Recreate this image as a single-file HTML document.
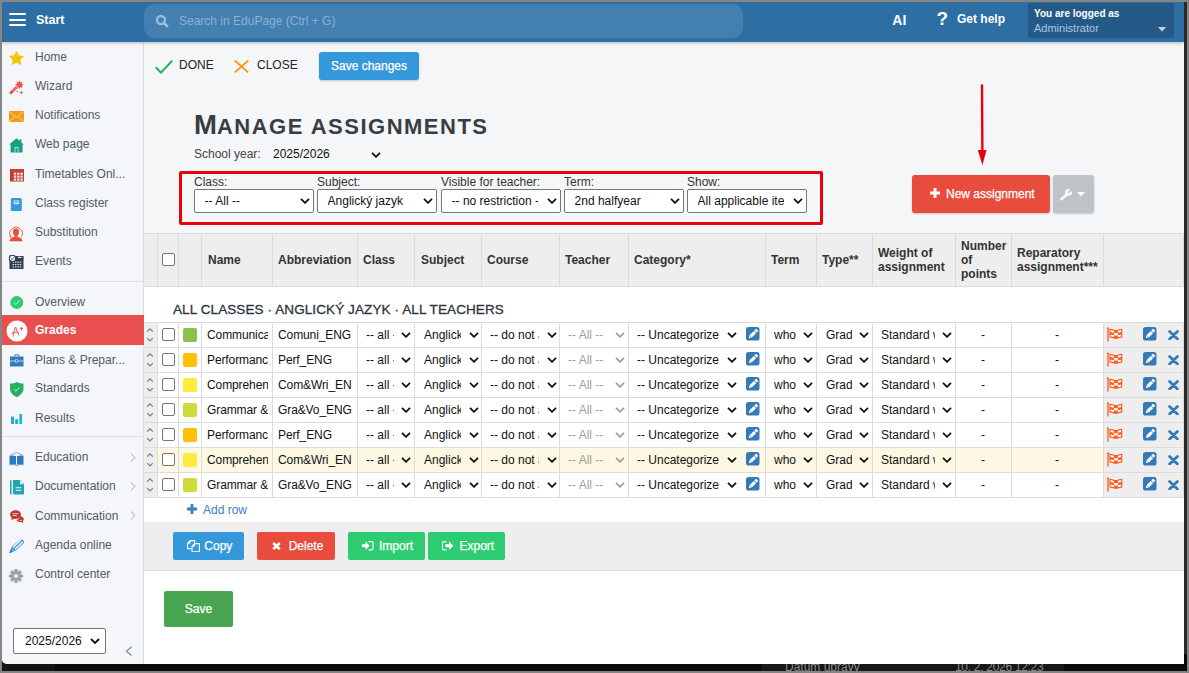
<!DOCTYPE html>
<html><head><meta charset="utf-8">
<style>
*{box-sizing:border-box;margin:0;padding:0}
html,body{width:1189px;height:673px;overflow:hidden;background:#858585;font-family:"Liberation Sans",sans-serif;font-size:12px;color:#222}
.abs{position:absolute}
#win{position:absolute;left:2px;top:2px;width:1182px;height:662px;overflow:hidden;background:#fff;border-bottom-left-radius:5px;z-index:2}
#rstrip{position:absolute;left:1184px;top:2px;width:3px;height:662px;background:#2a2a2a}
#bstrip{position:absolute;left:2px;top:654px;width:1185px;height:17px;background:#0a0a0a;overflow:hidden;z-index:1}
#hdr{position:absolute;left:0;top:0;width:1182px;height:40px;background:#2d6fa3;z-index:5;box-shadow:0 1px 3px rgba(0,0,0,.25)}
#side{position:absolute;left:0;top:0;width:142px;height:662px;background:#f4f6f9;border-right:1px solid #d9dde2}
#main{position:absolute;left:142px;top:40px;width:1040px;height:622px;background:#f5f6f8}
.hl{position:absolute;left:7px;width:17px;height:2px;background:#fff;border-radius:1px}
.nav{position:absolute;left:0;width:141px;height:29px;color:#4e5a6a;font-size:12px}
.nav .t{position:absolute;left:34px;top:8px;white-space:nowrap}
.nav .ic{position:absolute;left:7px;top:7px;width:16px;height:16px}
.nav .chev{position:absolute;left:126px;top:9px;width:6px;height:10px}
.nt{position:absolute;left:33px;color:#505b6b;font-size:12px;white-space:nowrap}
.hline{position:absolute;height:1px;background:#dcdcdc}
.vline{position:absolute;width:1px;background:#dcdcdc}
.cb{width:13px;height:13px;border:1px solid #767676;border-radius:2px;background:#fff}
.th{font-weight:bold;font-size:12px;color:#333;line-height:14px;white-space:nowrap}
.td{font-size:12px;color:#111;white-space:nowrap;overflow:hidden;letter-spacing:-0.1px}
.sel{border:1px solid #767676;border-radius:2px;background:#fff}
.sel .st{position:absolute;top:4px;font-size:12px;color:#111;white-space:nowrap;overflow:hidden;width:86.5px}
.sel .chev{position:absolute}
.btn{font-size:12px}
.sep{position:absolute;left:0;width:141px;height:1px;background:#dde1e6}
</style></head><body>
<div id="win">
  <div id="hdr">
    <div class="hl" style="top:11px"></div>
    <div class="hl" style="top:16.5px"></div>
    <div class="hl" style="top:22px"></div>
    <div class="abs" style="left:34px;top:11px;color:#fff;font-weight:bold;font-size:12.5px">Start</div>
    <div class="abs" style="left:142px;top:1.5px;width:599px;height:34px;border-radius:11px;background:#4280b1"></div>
    <svg class="abs" style="left:153px;top:12px" width="14" height="14" viewBox="0 0 14 14"><circle cx="6" cy="6" r="4" fill="none" stroke="#9cbcd8" stroke-width="2.3"/><path d="M9 9 L12.2 12.2" stroke="#9cbcd8" stroke-width="2.6" stroke-linecap="round"/></svg>
    <div class="abs" style="left:177px;top:12px;color:#8db2d3;font-size:12px">Search in EduPage (Ctrl + G)</div>
    <div class="abs" style="left:890.3px;top:10px;color:#fff;font-weight:bold;font-size:14px">AI</div>
    <div class="abs" style="left:934.5px;top:6.3px;color:#fff;font-weight:bold;font-size:19px">?</div>
    <div class="abs" style="left:955px;top:10px;color:#fff;font-weight:bold;font-size:12px">Get help</div>
    <div class="abs" style="left:1026px;top:1px;width:146px;height:35px;border-radius:3px;background:#255a88"></div>
    <div class="abs" style="left:1032px;top:6px;color:#fff;font-weight:bold;font-size:10px">You are logged as</div>
    <div class="abs" style="left:1032px;top:20px;color:#a8c6e6;font-size:11px">Administrator</div>
    <svg class="abs" style="left:1156px;top:25px" width="8" height="5"><path d="M0 0 L8 0 L4 4.5Z" fill="#c9d2da"/></svg>
  </div>
  <div id="side">
    <div class="sep" style="top:279px"></div>
    <div class="sep" style="top:434px"></div>
    <div class="abs" style="left:0;top:313px;width:142px;height:29.5px;background:#ea4f4f"></div>
    <div class="nt" style="top:47.75px">Home</div>
    <div class="nt" style="top:76.75px">Wizard</div>
    <div class="nt" style="top:105.75px">Notifications</div>
    <div class="nt" style="top:134.75px">Web page</div>
    <div class="nt" style="top:164.5px">Timetables Onl...</div>
    <div class="nt" style="top:193.6px">Class register</div>
    <div class="nt" style="top:222.6px">Substitution</div>
    <div class="nt" style="top:251.6px">Events</div>
    <div class="nt" style="top:292.5px">Overview</div>
    <div class="nt" style="top:321.3px;color:#fff;font-weight:bold">Grades</div>
    <div class="nt" style="top:350.5px">Plans &amp; Prepar...</div>
    <div class="nt" style="top:379.3px">Standards</div>
    <div class="nt" style="top:408.6px">Results</div>
    <div class="nt" style="top:448.3px">Education</div>
    <div class="nt" style="top:477.4px">Documentation</div>
    <div class="nt" style="top:506.6px">Communication</div>
    <div class="nt" style="top:535.8px">Agenda online</div>
    <div class="nt" style="top:565.1px">Control center</div>
    <svg class="abs" style="left:128px;top:451px" width="6" height="9"><path d="M1 0.5 L5 4.5 L1 8.5" fill="none" stroke="#c3c8ce" stroke-width="1.1"/></svg>
    <svg class="abs" style="left:128px;top:480px" width="6" height="9"><path d="M1 0.5 L5 4.5 L1 8.5" fill="none" stroke="#c3c8ce" stroke-width="1.1"/></svg>
    <svg class="abs" style="left:128px;top:509px" width="6" height="9"><path d="M1 0.5 L5 4.5 L1 8.5" fill="none" stroke="#c3c8ce" stroke-width="1.1"/></svg>
    <!-- icons -->
    <svg class="abs" style="left:7px;top:49px" width="15" height="14.5" viewBox="0 0 15 14.5"><path d="M7.50 0.10 L9.76 4.49 L14.63 5.28 L11.16 8.79 L11.91 13.67 L7.50 11.45 L3.09 13.67 L3.84 8.79 L0.37 5.28 L5.24 4.49Z" fill="#f1c40f" stroke="#f1c40f" stroke-width="0.4" stroke-linejoin="round"/></svg>
    <svg class="abs" style="left:7px;top:78px" width="16" height="16" viewBox="0 0 16 16"><path d="M10.40 0.20 L11.28 2.68 L13.65 1.55 L12.52 3.92 L15.00 4.80 L12.52 5.68 L13.65 8.05 L11.28 6.92 L10.40 9.40 L9.52 6.92 L7.15 8.05 L8.28 5.68 L5.80 4.80 L8.28 3.92 L7.15 1.55 L9.52 2.68Z" fill="#e74c3c"/><path d="M1.1 13.6 L8.4 6.3" stroke="#e74c3c" stroke-width="2.7"/><path d="M7.2 7.6 L9.4 5.4" stroke="#f4f6f9" stroke-width="0.7"/><path d="M2.50 9.90 L4.30 11.70" stroke="#f4f6f9" stroke-width="0.45"/><path d="M3.80 8.60 L5.60 10.40" stroke="#f4f6f9" stroke-width="0.45"/><path d="M5.10 7.30 L6.90 9.10" stroke="#f4f6f9" stroke-width="0.45"/><path d="M6.40 6.00 L8.20 7.80" stroke="#f4f6f9" stroke-width="0.45"/><path d="M12.30 10.10 L12.79 11.91 L14.60 12.40 L12.79 12.89 L12.30 14.70 L11.81 12.89 L10.00 12.40 L11.81 11.91Z" fill="#e74c3c"/><circle cx="8.3" cy="11.3" r="0.75" fill="#e74c3c"/></svg>
    <svg class="abs" style="left:7px;top:108.8px" width="15" height="11.5" viewBox="0 0 15 11.5"><rect x="0" y="0" width="15" height="11.5" fill="#f39c12"/><path d="M0.3 0.6 L7.5 6.3 L14.7 0.6 M0.3 11 L5.5 5.5 M14.7 11 L9.5 5.5" fill="none" stroke="#fbe6c4" stroke-width="0.8"/></svg>
    <svg class="abs" style="left:7px;top:136px" width="15" height="15" viewBox="0 0 15 15"><path d="M7.5 0.2 L10.5 2.8 L10.5 1.2 L12.3 1.2 L12.3 4.4 L14.8 6.6 L13.6 6.6 L13.6 14.4 L1.6 14.4 L1.6 6.6 L0.2 6.6Z" fill="#16a085"/><rect x="5.6" y="9" width="3.8" height="5.4" fill="#d5efe9"/><rect x="6.4" y="9.8" width="2.2" height="4.6" fill="#16a085"/></svg>
    <svg class="abs" style="left:7.8px;top:167px" width="14" height="12.5" viewBox="0 0 14 12.5"><rect x="0" y="0" width="14" height="12.5" fill="#c0392b"/><rect x="3.70" y="3.60" width="2.55" height="2.15" fill="#f7dcd8"/><rect x="7.05" y="3.60" width="2.55" height="2.15" fill="#f7dcd8"/><rect x="10.40" y="3.60" width="2.55" height="2.15" fill="#f7dcd8"/><rect x="3.70" y="6.55" width="2.55" height="2.15" fill="#f7dcd8"/><rect x="7.05" y="6.55" width="2.55" height="2.15" fill="#f7dcd8"/><rect x="10.40" y="6.55" width="2.55" height="2.15" fill="#f7dcd8"/><rect x="3.70" y="9.50" width="2.55" height="2.15" fill="#f7dcd8"/><rect x="7.05" y="9.50" width="2.55" height="2.15" fill="#f7dcd8"/><rect x="10.40" y="9.50" width="2.55" height="2.15" fill="#f7dcd8"/><g fill="#d9534f"><circle cx="1.9" cy="1.7" r="0.9"/><circle cx="4.9" cy="1.7" r="0.9"/><circle cx="8.2" cy="1.7" r="0.9"/><circle cx="11.6" cy="1.7" r="0.9"/></g></svg>
    <svg class="abs" style="left:7.7px;top:195.8px" width="12" height="13.2" viewBox="0 0 12 13.2"><rect x="0.8" y="0" width="11" height="13.2" rx="1.6" fill="#3498db"/><rect x="3.6" y="2.6" width="5.6" height="3.6" fill="#d6eaf8"/><rect x="4.2" y="3.6" width="4.4" height="1" fill="#3498db"/><g fill="#d6eaf8"><rect x="0" y="3" width="1.4" height="0.7"/><rect x="0" y="6" width="1.4" height="0.7"/><rect x="0" y="9" width="1.4" height="0.7"/></g></svg>
    <svg class="abs" style="left:7.4px;top:224px" width="14" height="15.5" viewBox="0 0 14 15.5"><path d="M7 2.5 C9 2.5 10 4 10 6 C10 7.8 9.2 9.2 8.4 9.9 L8.4 10.8 C10.8 11.5 13.3 12.4 13.5 15.3 L0.5 15.3 C0.7 12.4 3.2 11.5 5.6 10.8 L5.6 9.9 C4.8 9.2 4 7.8 4 6 C4 4 5 2.5 7 2.5Z" fill="#e74c3c"/><path d="M1.8 10.8 A6.2 6.2 0 1 1 12.4 10.8" fill="none" stroke="#e74c3c" stroke-width="0.9"/><path d="M0.3 10.3 L2.6 10.2 L1.9 12.3Z" fill="#e74c3c"/></svg>
    <svg class="abs" style="left:7.4px;top:253.2px" width="14.5" height="14.2" viewBox="0 0 14.5 14.2"><rect x="0.5" y="3" width="14" height="11.2" fill="#2c3e50"/><g fill="#e8ecef"><rect x="3.6" y="6.6" width="1.4" height="1.2"/><rect x="6" y="6.6" width="1.4" height="1.2"/><rect x="8.4" y="6.6" width="1.4" height="1.2"/><rect x="10.8" y="6.6" width="1.4" height="1.2"/><rect x="3.6" y="9" width="1.4" height="1.2"/><rect x="6" y="9" width="1.4" height="1.2"/><rect x="8.4" y="9" width="1.4" height="1.2"/><rect x="10.8" y="9" width="1.4" height="1.2"/><rect x="3.6" y="11.4" width="1.4" height="1.2"/><rect x="6" y="11.4" width="1.4" height="1.2"/><rect x="8.4" y="11.4" width="1.4" height="1.2"/><rect x="10.8" y="11.4" width="1.4" height="1.2"/></g><rect x="6.5" y="1" width="8" height="3.2" fill="#2c3e50"/><rect x="9" y="1.8" width="3.5" height="1.2" fill="#e8ecef"/><circle cx="3.4" cy="3.4" r="3.2" fill="#f4f6f9" stroke="#2c3e50" stroke-width="1.2"/><path d="M2 3.6 L3.2 4.6 L4.8 2.2" fill="none" stroke="#2c3e50" stroke-width="0.8"/></svg>
    <svg class="abs" style="left:7.8px;top:294px" width="13.5" height="13" viewBox="0 0 13.5 13"><circle cx="6.75" cy="6.5" r="6.5" fill="#2ecc71"/><path d="M3.8 6.8 L5.8 8.6 L9.8 4.4" fill="none" stroke="#d5f5e3" stroke-width="1"/></svg>
    <svg class="abs" style="left:3.7px;top:318px" width="22" height="22" viewBox="0 0 22 22"><circle cx="11" cy="11" r="10.5" fill="#fff"/><path d="M7 16.6 C7.5 13 8.4 9.5 9.6 7 C10.6 9.8 11.6 12.6 12.8 15.2 M5.4 13.4 C7.8 12.2 10.5 11.8 12.6 12.4 M13.8 8.6 L17.2 8.6 M15.5 6.9 L15.5 10.4" fill="none" stroke="#e85656" stroke-width="1"/></svg>
    <svg class="abs" style="left:8px;top:352px" width="13.5" height="12.5" viewBox="0 0 13.5 12.5"><path d="M4.8 2.5 L4.8 0.8 L8.7 0.8 L8.7 2.5" fill="none" stroke="#3a83c4" stroke-width="1"/><rect x="0" y="2.5" width="13.5" height="10" fill="#2e7bbf"/><rect x="0" y="6.6" width="13.5" height="0.8" fill="#dbe8f4"/><rect x="5.6" y="5.8" width="2.3" height="2.3" fill="#2e7bbf" stroke="#dbe8f4" stroke-width="0.6"/></svg>
    <svg class="abs" style="left:8px;top:380px" width="13.5" height="15.2" viewBox="0 0 13.5 15.2"><path d="M6.75 0 C8.8 1.2 11.3 1.6 13.5 1.6 L13.5 6.5 C13.5 10.5 10.5 13.6 6.75 15.2 C3 13.6 0 10.5 0 6.5 L0 1.6 C2.2 1.6 4.7 1.2 6.75 0Z" fill="#27ae60"/><path d="M4.2 7.4 L6 9.2 L9.4 5.6" fill="none" stroke="#d4efdf" stroke-width="1"/></svg>
    <svg class="abs" style="left:8.9px;top:411.7px" width="11.5" height="10.8" viewBox="0 0 11.5 10.8"><rect x="0" y="2.6" width="3" height="8.2" fill="#1ab3d1"/><rect x="4.2" y="5.2" width="3" height="5.6" fill="#1ab3d1"/><rect x="8.4" y="0" width="3" height="10.8" fill="#1ab3d1"/></svg>
    <svg class="abs" style="left:7px;top:449.8px" width="15" height="14" viewBox="0 0 15 14"><path d="M0.7 3.5 L7.5 0.5 L14.3 3.5" fill="none" stroke="#5b97cf" stroke-width="0.8"/><path d="M0.5 4 C2.5 3.3 5 3.3 7 4.3 L7 12.6 C5 11.8 2.5 11.8 0.5 12.4Z M8 4.3 C10 3.3 12.5 3.3 14.5 4 L14.5 12.4 C12.5 11.8 10 11.8 8 12.6Z" fill="#2b7bbf"/><path d="M0.5 12.9 C3 12.3 5.5 12.5 7.5 13.4 C9.5 12.5 12 12.3 14.5 12.9" fill="none" stroke="#2b7bbf" stroke-width="0.8"/></svg>
    <svg class="abs" style="left:7.6px;top:478px" width="14.5" height="14.5" viewBox="0 0 14.5 14.5"><rect x="0" y="0.3" width="1.6" height="14" fill="#22a6b3"/><path d="M3 0 L10 0 L14.3 4.3 L14.3 13.2 C14.3 13.9 13.9 14.4 13.2 14.4 L4.1 14.4 C3.4 14.4 3 13.9 3 13.2Z" fill="#22a6b3"/><path d="M10 0.4 L10 4.2 L14 4.2Z" fill="#e0f3f5"/><rect x="5.8" y="7.2" width="5.5" height="1" fill="#e0f3f5"/><rect x="5.8" y="9.8" width="5.5" height="1" fill="#e0f3f5"/></svg>
    <svg class="abs" style="left:7.6px;top:508px" width="14" height="13.2" viewBox="0 0 14 13.2"><path d="M5.6 0.2 C8.6 0.2 11 2 11 4.6 C11 7.2 8.6 9 5.6 9 C4.9 9 4.3 8.9 3.7 8.8 L1.2 10.4 L1.8 8 C0.7 7.2 0.2 6 0.2 4.6 C0.2 2 2.6 0.2 5.6 0.2Z" fill="#c0392b"/><path d="M10.8 6.2 C12.7 6.6 13.8 7.8 13.8 9.2 C13.8 10 13.4 10.7 12.8 11.2 L13.3 13 L11.3 12 C10.9 12.1 10.5 12.1 10.1 12.1 C8.6 12.1 7.3 11.5 6.6 10.6" fill="#c0392b"/><rect x="2.8" y="3.3" width="5.6" height="0.9" fill="#f2d7d5"/><rect x="2.8" y="5.2" width="4" height="0.9" fill="#f2d7d5"/><path d="M8.5 9.8 C9.5 10.6 11 10.8 12.2 10.3" fill="none" stroke="#f2d7d5" stroke-width="0.7"/></svg>
    <svg class="abs" style="left:6.8px;top:536.5px" width="15.5" height="14.5" viewBox="0 0 15.5 14.5"><path d="M11.2 0.6 C12.5 0 14.4 0.9 15 2.2 C15.3 3 15.1 3.8 14.5 4.4 L7 11.6 L0.3 14.2 L2.8 7.6Z" fill="#4ba3e3"/><path d="M4 8.2 L11.8 0.9 M6 10.2 L13.8 2.9" fill="none" stroke="#f0f6fc" stroke-width="1.4"/><path d="M0.3 14.2 L1.6 10.6 L3.9 12.9Z" fill="#2b86c9"/></svg>
    <svg class="abs" style="left:7.3px;top:566.5px" width="14" height="14" viewBox="0 0 14 14"><g fill="#95a5a6"><circle cx="7" cy="7" r="5"/><rect x="5.5" y="0" width="3" height="14" rx="0.6"/><rect x="0" y="5.5" width="14" height="3" rx="0.6"/><rect x="5.5" y="0" width="3" height="14" rx="0.6" transform="rotate(45 7 7)"/><rect x="5.5" y="0" width="3" height="14" rx="0.6" transform="rotate(-45 7 7)"/></g><circle cx="7" cy="7" r="2" fill="#f4f6f9"/></svg>
    <div class="abs" style="left:11px;top:626px;width:92.5px;height:25.5px;border:1px solid #767676;border-radius:2px;background:#fff"></div>
    <div class="abs" style="left:23px;top:632px;font-size:12px;color:#111">2025/2026</div>
    <svg class="abs" style="left:88px;top:635.5px" width="10" height="7"><path d="M1 1 L5 5 L9 1" fill="none" stroke="#111" stroke-width="1.8"/></svg>
    <svg class="abs" style="left:122.5px;top:643.5px" width="8" height="11"><path d="M6.5 0.8 L1.5 5.2 L6.5 9.6" fill="none" stroke="#7f93a8" stroke-width="1.3"/></svg>
  </div>
  <div id="main">
<!--MAIN-->
<div class="abs" style="left:0;top:191px;width:1040px;height:431px;background:#fff"></div>
<svg class="abs" style="left:11px;top:17.5px" width="18" height="14" viewBox="0 0 18 14"><path d="M0.8 7.2 L6 12.6 L17.2 0.8" fill="none" stroke="#27ae60" stroke-width="2"/></svg>
<div class="abs" style="left:35px;top:16px;font-size:12px;color:#222">DONE</div>
<svg class="abs" style="left:89.5px;top:17.5px" width="15" height="13" viewBox="0 0 15 13"><path d="M0.8 0.5 L14.2 12.5 M14.2 0.5 L0.8 12.5" fill="none" stroke="#f39c12" stroke-width="1.8"/></svg>
<div class="abs" style="left:113px;top:16px;font-size:12px;color:#222">CLOSE</div>
<div class="abs btn" style="left:175px;top:10px;width:100px;height:28px;background:#3498db;line-height:28px;text-align:center;color:#fff;border-radius:3px;box-shadow:0 1px 2px rgba(0,0,0,.2);-webkit-text-stroke:0.25px #fff">Save changes</div>
<div class="abs" style="left:50px;top:66.5px;color:#373d44;font-weight:bold;white-space:nowrap;letter-spacing:1.5px"><span style="font-size:27.5px;letter-spacing:0">M</span><span style="font-size:22px">ANAGE ASSIGNMENTS</span></div>
<div class="abs" style="left:50px;top:105px;color:#444;font-size:12px">School year:</div>
<div class="abs" style="left:129px;top:105px;color:#111;font-size:12px">2025/2026</div>
<svg class="abs" style="left:227px;top:109.5px" width="10" height="6"><path d="M1 0.8 L5 4.8 L9 0.8" fill="none" stroke="#111" stroke-width="1.8"/></svg>
<div class="abs" style="left:35px;top:129px;width:644px;height:54px;border:3px solid #e8000b;border-radius:2px"></div>
<div class="abs" style="left:50px;top:133px;color:#333;font-size:12px">Class:</div>
<div class="abs sel" style="left:50px;top:147px;width:119.5px;height:23.5px"><span class="st" style="left:9.6px">-- All --</span><span class="sfade"></span><svg class="chev" style="left:104.8px;top:8px" width="10" height="6"><path d="M1 0.8 L5 4.8 L9 0.8" fill="none" stroke="#111" stroke-width="1.8"/></svg></div>
<div class="abs" style="left:173px;top:133px;color:#333;font-size:12px">Subject:</div>
<div class="abs sel" style="left:173px;top:147px;width:119.5px;height:23.5px"><span class="st" style="left:9.6px">Anglický jazyk</span><span class="sfade"></span><svg class="chev" style="left:104.8px;top:8px" width="10" height="6"><path d="M1 0.8 L5 4.8 L9 0.8" fill="none" stroke="#111" stroke-width="1.8"/></svg></div>
<div class="abs" style="left:297px;top:133px;color:#333;font-size:12px">Visible for teacher:</div>
<div class="abs sel" style="left:297px;top:147px;width:119.5px;height:23.5px"><span class="st" style="left:9.6px">-- no restriction --</span><span class="sfade"></span><svg class="chev" style="left:104.8px;top:8px" width="10" height="6"><path d="M1 0.8 L5 4.8 L9 0.8" fill="none" stroke="#111" stroke-width="1.8"/></svg></div>
<div class="abs" style="left:420px;top:133px;color:#333;font-size:12px">Term:</div>
<div class="abs sel" style="left:420px;top:147px;width:119.5px;height:23.5px"><span class="st" style="left:9.6px">2nd halfyear</span><span class="sfade"></span><svg class="chev" style="left:104.8px;top:8px" width="10" height="6"><path d="M1 0.8 L5 4.8 L9 0.8" fill="none" stroke="#111" stroke-width="1.8"/></svg></div>
<div class="abs" style="left:543px;top:133px;color:#333;font-size:12px">Show:</div>
<div class="abs sel" style="left:543px;top:147px;width:119.5px;height:23.5px"><span class="st" style="left:9.6px">All applicable items</span><span class="sfade"></span><svg class="chev" style="left:104.8px;top:8px" width="10" height="6"><path d="M1 0.8 L5 4.8 L9 0.8" fill="none" stroke="#111" stroke-width="1.8"/></svg></div>
<div class="abs" style="left:768px;top:133px;width:138px;height:38px;background:#e74c3c;border-radius:3px;box-shadow:0 1px 2px rgba(0,0,0,.2)"></div>
<svg class="abs" style="left:786.2px;top:146.3px" width="10" height="10"><path d="M5 0 L5 10 M0 5 L10 5" stroke="#fff" stroke-width="3"/></svg>
<div class="abs" style="left:802px;top:145px;color:#fff;font-size:12px;-webkit-text-stroke:0.25px #fff">New assignment</div>
<div class="abs" style="left:909px;top:133px;width:41px;height:38px;background:#bdc3c7;border-radius:3px;box-shadow:0 1px 2px rgba(0,0,0,.2)"></div>
<svg class="abs" style="left:916px;top:145.5px" width="13" height="13" viewBox="0 0 13 13"><path d="M1.4 11.2 L7.2 6" stroke="#fff" stroke-width="2.6" stroke-linecap="round"/><circle cx="8.6" cy="4.3" r="3.4" fill="#fff"/><path d="M8.6 4.3 L10.2 0 L13 0 L13 3 Z" fill="#bdc3c7"/><circle cx="8.6" cy="4.3" r="1.1" fill="#bdc3c7"/></svg>
<svg class="abs" style="left:933.3px;top:149.6px" width="8" height="5"><path d="M0 0 L8 0 L4 4.6Z" fill="#fff"/></svg>
<svg class="abs" style="left:832px;top:42px" width="12" height="82" viewBox="0 0 12 82"><path d="M6 1.5 L6.4 68" stroke="#e8000b" stroke-width="2.4" stroke-linecap="round"/><path d="M1.8 66 L10.6 66 L6.4 81Z" fill="#e8000b"/></svg>
<div class="abs" style="left:0;top:191px;width:1039px;height:53px;background:#eee"></div>
<div class="abs" style="left:0;top:280px;width:13px;height:175px;background:#eee"></div>
<div class="abs" style="left:959px;top:280px;width:80px;height:175px;background:#eee"></div>
<div class="abs" style="left:13px;top:405px;width:946px;height:25px;background:#fcf8e3"></div>
<div class="hline" style="left:0;top:191px;width:1040px"></div>
<div class="hline" style="left:0;top:244px;width:1040px"></div>
<div class="hline" style="left:0;top:280px;width:1040px"></div>
<div class="hline" style="left:0;top:305px;width:1040px"></div>
<div class="hline" style="left:0;top:330px;width:1040px"></div>
<div class="hline" style="left:0;top:355px;width:1040px"></div>
<div class="hline" style="left:0;top:380px;width:1040px"></div>
<div class="hline" style="left:0;top:405px;width:1040px"></div>
<div class="hline" style="left:0;top:430px;width:1040px"></div>
<div class="hline" style="left:0;top:455px;width:1040px"></div>
<div class="vline" style="left:13px;top:191px;height:53px"></div>
<div class="vline" style="left:13px;top:280px;height:176px"></div>
<div class="vline" style="left:34px;top:191px;height:53px"></div>
<div class="vline" style="left:34px;top:280px;height:176px"></div>
<div class="vline" style="left:57px;top:191px;height:53px"></div>
<div class="vline" style="left:57px;top:280px;height:176px"></div>
<div class="vline" style="left:128px;top:191px;height:53px"></div>
<div class="vline" style="left:128px;top:280px;height:176px"></div>
<div class="vline" style="left:213px;top:191px;height:53px"></div>
<div class="vline" style="left:213px;top:280px;height:176px"></div>
<div class="vline" style="left:270px;top:191px;height:53px"></div>
<div class="vline" style="left:270px;top:280px;height:176px"></div>
<div class="vline" style="left:337px;top:191px;height:53px"></div>
<div class="vline" style="left:337px;top:280px;height:176px"></div>
<div class="vline" style="left:415px;top:191px;height:53px"></div>
<div class="vline" style="left:415px;top:280px;height:176px"></div>
<div class="vline" style="left:484px;top:191px;height:53px"></div>
<div class="vline" style="left:484px;top:280px;height:176px"></div>
<div class="vline" style="left:621px;top:191px;height:53px"></div>
<div class="vline" style="left:621px;top:280px;height:176px"></div>
<div class="vline" style="left:672px;top:191px;height:53px"></div>
<div class="vline" style="left:672px;top:280px;height:176px"></div>
<div class="vline" style="left:728px;top:191px;height:53px"></div>
<div class="vline" style="left:728px;top:280px;height:176px"></div>
<div class="vline" style="left:811px;top:191px;height:53px"></div>
<div class="vline" style="left:811px;top:280px;height:176px"></div>
<div class="vline" style="left:867px;top:191px;height:53px"></div>
<div class="vline" style="left:867px;top:280px;height:176px"></div>
<div class="vline" style="left:959px;top:191px;height:53px"></div>
<div class="vline" style="left:959px;top:280px;height:176px"></div>
<div class="vline" style="left:1039px;top:191px;height:53px"></div>
<div class="vline" style="left:1039px;top:280px;height:176px"></div>
<div class="abs cb" style="left:18px;top:211px"></div>
<div class="abs th" style="left:64px;top:211px">Name</div>
<div class="abs th" style="left:134px;top:211px">Abbreviation</div>
<div class="abs th" style="left:219px;top:211px">Class</div>
<div class="abs th" style="left:277px;top:211px">Subject</div>
<div class="abs th" style="left:343px;top:211px">Course</div>
<div class="abs th" style="left:421px;top:211px">Teacher</div>
<div class="abs th" style="left:490px;top:211px">Category*</div>
<div class="abs th" style="left:627px;top:211px">Term</div>
<div class="abs th" style="left:678px;top:211px">Type**</div>
<div class="abs th" style="left:734px;top:204px">Weight of<br>assignment</div>
<div class="abs th" style="left:817px;top:197px">Number<br>of<br>points</div>
<div class="abs th" style="left:873px;top:204px">Reparatory<br>assignment***</div>
<div class="abs" style="left:29px;top:260px;font-size:13.5px;color:#2c3440;letter-spacing:0.1px;white-space:nowrap;-webkit-text-stroke:0.3px #2c3440">ALL CLASSES · ANGLICKÝ JAZYK · ALL TEACHERS</div>
<svg class="abs" style="left:2px;top:283px" width="8" height="18" viewBox="0 0 8 18"><path d="M1.2 6.6 L4 3.8 L6.8 6.6 M1.2 13.2 L4 16 L6.8 13.2" fill="none" stroke="#7a7a7a" stroke-width="1.2"/></svg>
<div class="abs cb" style="left:18px;top:286px"></div>
<div class="abs" style="left:39px;top:286px;width:14px;height:14px;border-radius:2px;background:#8bc34a"></div>
<div class="abs td" style="left:63px;top:286px;width:61px">Communica</div>
<div class="abs td" style="left:134px;top:286px;width:74px">Comuni_ENG</div>
<div class="abs td" style="left:222px;top:286px;width:28px;color:#111;letter-spacing:0">-- all --</div>
<svg class="abs" style="left:257px;top:290px" width="10" height="6"><path d="M1 0.8 L5 4.8 L9 0.8" fill="none" stroke="#111" stroke-width="1.8"/></svg>
<div class="abs td" style="left:280px;top:286px;width:37px;color:#111;letter-spacing:0">Anglický jazyk</div>
<svg class="abs" style="left:325px;top:290px" width="10" height="6"><path d="M1 0.8 L5 4.8 L9 0.8" fill="none" stroke="#111" stroke-width="1.8"/></svg>
<div class="abs td" style="left:346px;top:286px;width:49px;color:#111;letter-spacing:0">-- do not assign --</div>
<svg class="abs" style="left:402.5px;top:290px" width="10" height="6"><path d="M1 0.8 L5 4.8 L9 0.8" fill="none" stroke="#111" stroke-width="1.8"/></svg>
<div class="abs td" style="left:424px;top:286px;width:40px;color:#a0a0a0;letter-spacing:0">-- All --</div>
<svg class="abs" style="left:470.5px;top:290px" width="10" height="6"><path d="M1 0.8 L5 4.8 L9 0.8" fill="none" stroke="#a0a0a0" stroke-width="1.8"/></svg>
<div class="abs td" style="left:493px;top:286px;width:82px;color:#111;letter-spacing:0">-- Uncategorized --</div>
<svg class="abs" style="left:582.5px;top:290px" width="10" height="6"><path d="M1 0.8 L5 4.8 L9 0.8" fill="none" stroke="#111" stroke-width="1.8"/></svg>
<svg class="abs" style="left:601.5px;top:285.3px" width="14" height="14" viewBox="0 0 14 14"><rect width="13.5" height="13.6" rx="2.6" fill="#337ab7"/><g transform="rotate(-45 7 7)" fill="#fff"><path d="M1.2 7 L3.2 5.4 L3.2 8.6Z"/><rect x="3.6" y="5.4" width="6.2" height="3.2"/><rect x="10.4" y="5.4" width="2.6" height="3.2" rx="0.6"/></g></svg>
<div class="abs td" style="left:630px;top:286px;width:22px;color:#111;letter-spacing:0">whole</div>
<svg class="abs" style="left:658.5px;top:290px" width="10" height="6"><path d="M1 0.8 L5 4.8 L9 0.8" fill="none" stroke="#111" stroke-width="1.8"/></svg>
<div class="abs td" style="left:682px;top:286px;width:25.5px;color:#111;letter-spacing:0">Grade</div>
<svg class="abs" style="left:714.5px;top:290px" width="10" height="6"><path d="M1 0.8 L5 4.8 L9 0.8" fill="none" stroke="#111" stroke-width="1.8"/></svg>
<div class="abs td" style="left:737px;top:286px;width:53.5px;color:#111;letter-spacing:0">Standard weight</div>
<svg class="abs" style="left:797.5px;top:290px" width="10" height="6"><path d="M1 0.8 L5 4.8 L9 0.8" fill="none" stroke="#111" stroke-width="1.8"/></svg>
<div class="abs td" style="left:811px;top:286px;width:56px;text-align:center">-</div>
<div class="abs td" style="left:867px;top:286px;width:92px;text-align:center">-</div>
<svg class="abs" style="left:961.5px;top:284.5px" width="17" height="15" viewBox="0 0 17 15"><path d="M2 1 L2 14.5" stroke="#ff5a1f" stroke-width="1.3"/><circle cx="2" cy="1.2" r="0.9" fill="#ff5a1f"/><path d="M4.00 2.40 L4.97 2.48 L5.95 2.70 L6.92 3.00 L7.90 3.30 L8.88 3.52 L9.85 3.60 L10.82 3.52 L11.80 3.30 L12.78 3.00 L13.75 2.70 L14.72 2.48 L15.70 2.40 L15.70 10.00 L14.72 10.08 L13.75 10.30 L12.78 10.60 L11.80 10.90 L10.82 11.12 L9.85 11.20 L8.88 11.12 L7.90 10.90 L6.92 10.60 L5.95 10.30 L4.97 10.08 L4.00 10.00Z" fill="#fff" stroke="#ff5a1f" stroke-width="1.2"/><path d="M7.90 3.30 L9.85 3.60 L11.80 3.30 L11.80 5.83 L9.85 6.13 L7.90 5.83Z M4.00 4.93 L5.95 5.23 L7.90 5.83 L7.90 8.37 L5.95 7.77 L4.00 7.47Z M11.80 5.83 L13.75 5.23 L15.70 4.93 L15.70 7.47 L13.75 7.77 L11.80 8.37Z M7.90 8.37 L9.85 8.67 L11.80 8.37 L11.80 10.90 L9.85 11.20 L7.90 10.90Z" fill="#ff5a1f"/></svg>
<svg class="abs" style="left:999px;top:285.3px" width="14" height="14" viewBox="0 0 14 14"><rect width="13.5" height="13.6" rx="2.6" fill="#337ab7"/><g transform="rotate(-45 7 7)" fill="#fff"><path d="M1.2 7 L3.2 5.4 L3.2 8.6Z"/><rect x="3.6" y="5.4" width="6.2" height="3.2"/><rect x="10.4" y="5.4" width="2.6" height="3.2" rx="0.6"/></g></svg>
<svg class="abs" style="left:1023.5px;top:287.5px" width="11" height="10.5" viewBox="0 0 11 10.5"><path d="M1.6 1.5 L9.4 9 M9.4 1.5 L1.6 9" stroke="#337ab7" stroke-width="2.8" stroke-linecap="round"/></svg>
<svg class="abs" style="left:2px;top:308px" width="8" height="18" viewBox="0 0 8 18"><path d="M1.2 6.6 L4 3.8 L6.8 6.6 M1.2 13.2 L4 16 L6.8 13.2" fill="none" stroke="#7a7a7a" stroke-width="1.2"/></svg>
<div class="abs cb" style="left:18px;top:311px"></div>
<div class="abs" style="left:39px;top:311px;width:14px;height:14px;border-radius:2px;background:#ffc107"></div>
<div class="abs td" style="left:63px;top:311px;width:61px">Performanc</div>
<div class="abs td" style="left:134px;top:311px;width:74px">Perf_ENG</div>
<div class="abs td" style="left:222px;top:311px;width:28px;color:#111;letter-spacing:0">-- all --</div>
<svg class="abs" style="left:257px;top:315px" width="10" height="6"><path d="M1 0.8 L5 4.8 L9 0.8" fill="none" stroke="#111" stroke-width="1.8"/></svg>
<div class="abs td" style="left:280px;top:311px;width:37px;color:#111;letter-spacing:0">Anglický jazyk</div>
<svg class="abs" style="left:325px;top:315px" width="10" height="6"><path d="M1 0.8 L5 4.8 L9 0.8" fill="none" stroke="#111" stroke-width="1.8"/></svg>
<div class="abs td" style="left:346px;top:311px;width:49px;color:#111;letter-spacing:0">-- do not assign --</div>
<svg class="abs" style="left:402.5px;top:315px" width="10" height="6"><path d="M1 0.8 L5 4.8 L9 0.8" fill="none" stroke="#111" stroke-width="1.8"/></svg>
<div class="abs td" style="left:424px;top:311px;width:40px;color:#a0a0a0;letter-spacing:0">-- All --</div>
<svg class="abs" style="left:470.5px;top:315px" width="10" height="6"><path d="M1 0.8 L5 4.8 L9 0.8" fill="none" stroke="#a0a0a0" stroke-width="1.8"/></svg>
<div class="abs td" style="left:493px;top:311px;width:82px;color:#111;letter-spacing:0">-- Uncategorized --</div>
<svg class="abs" style="left:582.5px;top:315px" width="10" height="6"><path d="M1 0.8 L5 4.8 L9 0.8" fill="none" stroke="#111" stroke-width="1.8"/></svg>
<svg class="abs" style="left:601.5px;top:310.3px" width="14" height="14" viewBox="0 0 14 14"><rect width="13.5" height="13.6" rx="2.6" fill="#337ab7"/><g transform="rotate(-45 7 7)" fill="#fff"><path d="M1.2 7 L3.2 5.4 L3.2 8.6Z"/><rect x="3.6" y="5.4" width="6.2" height="3.2"/><rect x="10.4" y="5.4" width="2.6" height="3.2" rx="0.6"/></g></svg>
<div class="abs td" style="left:630px;top:311px;width:22px;color:#111;letter-spacing:0">whole</div>
<svg class="abs" style="left:658.5px;top:315px" width="10" height="6"><path d="M1 0.8 L5 4.8 L9 0.8" fill="none" stroke="#111" stroke-width="1.8"/></svg>
<div class="abs td" style="left:682px;top:311px;width:25.5px;color:#111;letter-spacing:0">Grade</div>
<svg class="abs" style="left:714.5px;top:315px" width="10" height="6"><path d="M1 0.8 L5 4.8 L9 0.8" fill="none" stroke="#111" stroke-width="1.8"/></svg>
<div class="abs td" style="left:737px;top:311px;width:53.5px;color:#111;letter-spacing:0">Standard weight</div>
<svg class="abs" style="left:797.5px;top:315px" width="10" height="6"><path d="M1 0.8 L5 4.8 L9 0.8" fill="none" stroke="#111" stroke-width="1.8"/></svg>
<div class="abs td" style="left:811px;top:311px;width:56px;text-align:center">-</div>
<div class="abs td" style="left:867px;top:311px;width:92px;text-align:center">-</div>
<svg class="abs" style="left:961.5px;top:309.5px" width="17" height="15" viewBox="0 0 17 15"><path d="M2 1 L2 14.5" stroke="#ff5a1f" stroke-width="1.3"/><circle cx="2" cy="1.2" r="0.9" fill="#ff5a1f"/><path d="M4.00 2.40 L4.97 2.48 L5.95 2.70 L6.92 3.00 L7.90 3.30 L8.88 3.52 L9.85 3.60 L10.82 3.52 L11.80 3.30 L12.78 3.00 L13.75 2.70 L14.72 2.48 L15.70 2.40 L15.70 10.00 L14.72 10.08 L13.75 10.30 L12.78 10.60 L11.80 10.90 L10.82 11.12 L9.85 11.20 L8.88 11.12 L7.90 10.90 L6.92 10.60 L5.95 10.30 L4.97 10.08 L4.00 10.00Z" fill="#fff" stroke="#ff5a1f" stroke-width="1.2"/><path d="M7.90 3.30 L9.85 3.60 L11.80 3.30 L11.80 5.83 L9.85 6.13 L7.90 5.83Z M4.00 4.93 L5.95 5.23 L7.90 5.83 L7.90 8.37 L5.95 7.77 L4.00 7.47Z M11.80 5.83 L13.75 5.23 L15.70 4.93 L15.70 7.47 L13.75 7.77 L11.80 8.37Z M7.90 8.37 L9.85 8.67 L11.80 8.37 L11.80 10.90 L9.85 11.20 L7.90 10.90Z" fill="#ff5a1f"/></svg>
<svg class="abs" style="left:999px;top:310.3px" width="14" height="14" viewBox="0 0 14 14"><rect width="13.5" height="13.6" rx="2.6" fill="#337ab7"/><g transform="rotate(-45 7 7)" fill="#fff"><path d="M1.2 7 L3.2 5.4 L3.2 8.6Z"/><rect x="3.6" y="5.4" width="6.2" height="3.2"/><rect x="10.4" y="5.4" width="2.6" height="3.2" rx="0.6"/></g></svg>
<svg class="abs" style="left:1023.5px;top:312.5px" width="11" height="10.5" viewBox="0 0 11 10.5"><path d="M1.6 1.5 L9.4 9 M9.4 1.5 L1.6 9" stroke="#337ab7" stroke-width="2.8" stroke-linecap="round"/></svg>
<svg class="abs" style="left:2px;top:333px" width="8" height="18" viewBox="0 0 8 18"><path d="M1.2 6.6 L4 3.8 L6.8 6.6 M1.2 13.2 L4 16 L6.8 13.2" fill="none" stroke="#7a7a7a" stroke-width="1.2"/></svg>
<div class="abs cb" style="left:18px;top:336px"></div>
<div class="abs" style="left:39px;top:336px;width:14px;height:14px;border-radius:2px;background:#ffeb3b"></div>
<div class="abs td" style="left:63px;top:336px;width:61px">Comprehen</div>
<div class="abs td" style="left:134px;top:336px;width:74px">Com&amp;Wri_EN</div>
<div class="abs td" style="left:222px;top:336px;width:28px;color:#111;letter-spacing:0">-- all --</div>
<svg class="abs" style="left:257px;top:340px" width="10" height="6"><path d="M1 0.8 L5 4.8 L9 0.8" fill="none" stroke="#111" stroke-width="1.8"/></svg>
<div class="abs td" style="left:280px;top:336px;width:37px;color:#111;letter-spacing:0">Anglický jazyk</div>
<svg class="abs" style="left:325px;top:340px" width="10" height="6"><path d="M1 0.8 L5 4.8 L9 0.8" fill="none" stroke="#111" stroke-width="1.8"/></svg>
<div class="abs td" style="left:346px;top:336px;width:49px;color:#111;letter-spacing:0">-- do not assign --</div>
<svg class="abs" style="left:402.5px;top:340px" width="10" height="6"><path d="M1 0.8 L5 4.8 L9 0.8" fill="none" stroke="#111" stroke-width="1.8"/></svg>
<div class="abs td" style="left:424px;top:336px;width:40px;color:#a0a0a0;letter-spacing:0">-- All --</div>
<svg class="abs" style="left:470.5px;top:340px" width="10" height="6"><path d="M1 0.8 L5 4.8 L9 0.8" fill="none" stroke="#a0a0a0" stroke-width="1.8"/></svg>
<div class="abs td" style="left:493px;top:336px;width:82px;color:#111;letter-spacing:0">-- Uncategorized --</div>
<svg class="abs" style="left:582.5px;top:340px" width="10" height="6"><path d="M1 0.8 L5 4.8 L9 0.8" fill="none" stroke="#111" stroke-width="1.8"/></svg>
<svg class="abs" style="left:601.5px;top:335.3px" width="14" height="14" viewBox="0 0 14 14"><rect width="13.5" height="13.6" rx="2.6" fill="#337ab7"/><g transform="rotate(-45 7 7)" fill="#fff"><path d="M1.2 7 L3.2 5.4 L3.2 8.6Z"/><rect x="3.6" y="5.4" width="6.2" height="3.2"/><rect x="10.4" y="5.4" width="2.6" height="3.2" rx="0.6"/></g></svg>
<div class="abs td" style="left:630px;top:336px;width:22px;color:#111;letter-spacing:0">whole</div>
<svg class="abs" style="left:658.5px;top:340px" width="10" height="6"><path d="M1 0.8 L5 4.8 L9 0.8" fill="none" stroke="#111" stroke-width="1.8"/></svg>
<div class="abs td" style="left:682px;top:336px;width:25.5px;color:#111;letter-spacing:0">Grade</div>
<svg class="abs" style="left:714.5px;top:340px" width="10" height="6"><path d="M1 0.8 L5 4.8 L9 0.8" fill="none" stroke="#111" stroke-width="1.8"/></svg>
<div class="abs td" style="left:737px;top:336px;width:53.5px;color:#111;letter-spacing:0">Standard weight</div>
<svg class="abs" style="left:797.5px;top:340px" width="10" height="6"><path d="M1 0.8 L5 4.8 L9 0.8" fill="none" stroke="#111" stroke-width="1.8"/></svg>
<div class="abs td" style="left:811px;top:336px;width:56px;text-align:center">-</div>
<div class="abs td" style="left:867px;top:336px;width:92px;text-align:center">-</div>
<svg class="abs" style="left:961.5px;top:334.5px" width="17" height="15" viewBox="0 0 17 15"><path d="M2 1 L2 14.5" stroke="#ff5a1f" stroke-width="1.3"/><circle cx="2" cy="1.2" r="0.9" fill="#ff5a1f"/><path d="M4.00 2.40 L4.97 2.48 L5.95 2.70 L6.92 3.00 L7.90 3.30 L8.88 3.52 L9.85 3.60 L10.82 3.52 L11.80 3.30 L12.78 3.00 L13.75 2.70 L14.72 2.48 L15.70 2.40 L15.70 10.00 L14.72 10.08 L13.75 10.30 L12.78 10.60 L11.80 10.90 L10.82 11.12 L9.85 11.20 L8.88 11.12 L7.90 10.90 L6.92 10.60 L5.95 10.30 L4.97 10.08 L4.00 10.00Z" fill="#fff" stroke="#ff5a1f" stroke-width="1.2"/><path d="M7.90 3.30 L9.85 3.60 L11.80 3.30 L11.80 5.83 L9.85 6.13 L7.90 5.83Z M4.00 4.93 L5.95 5.23 L7.90 5.83 L7.90 8.37 L5.95 7.77 L4.00 7.47Z M11.80 5.83 L13.75 5.23 L15.70 4.93 L15.70 7.47 L13.75 7.77 L11.80 8.37Z M7.90 8.37 L9.85 8.67 L11.80 8.37 L11.80 10.90 L9.85 11.20 L7.90 10.90Z" fill="#ff5a1f"/></svg>
<svg class="abs" style="left:999px;top:335.3px" width="14" height="14" viewBox="0 0 14 14"><rect width="13.5" height="13.6" rx="2.6" fill="#337ab7"/><g transform="rotate(-45 7 7)" fill="#fff"><path d="M1.2 7 L3.2 5.4 L3.2 8.6Z"/><rect x="3.6" y="5.4" width="6.2" height="3.2"/><rect x="10.4" y="5.4" width="2.6" height="3.2" rx="0.6"/></g></svg>
<svg class="abs" style="left:1023.5px;top:337.5px" width="11" height="10.5" viewBox="0 0 11 10.5"><path d="M1.6 1.5 L9.4 9 M9.4 1.5 L1.6 9" stroke="#337ab7" stroke-width="2.8" stroke-linecap="round"/></svg>
<svg class="abs" style="left:2px;top:358px" width="8" height="18" viewBox="0 0 8 18"><path d="M1.2 6.6 L4 3.8 L6.8 6.6 M1.2 13.2 L4 16 L6.8 13.2" fill="none" stroke="#7a7a7a" stroke-width="1.2"/></svg>
<div class="abs cb" style="left:18px;top:361px"></div>
<div class="abs" style="left:39px;top:361px;width:14px;height:14px;border-radius:2px;background:#cddc39"></div>
<div class="abs td" style="left:63px;top:361px;width:61px">Grammar &amp;</div>
<div class="abs td" style="left:134px;top:361px;width:74px">Gra&amp;Vo_ENG</div>
<div class="abs td" style="left:222px;top:361px;width:28px;color:#111;letter-spacing:0">-- all --</div>
<svg class="abs" style="left:257px;top:365px" width="10" height="6"><path d="M1 0.8 L5 4.8 L9 0.8" fill="none" stroke="#111" stroke-width="1.8"/></svg>
<div class="abs td" style="left:280px;top:361px;width:37px;color:#111;letter-spacing:0">Anglický jazyk</div>
<svg class="abs" style="left:325px;top:365px" width="10" height="6"><path d="M1 0.8 L5 4.8 L9 0.8" fill="none" stroke="#111" stroke-width="1.8"/></svg>
<div class="abs td" style="left:346px;top:361px;width:49px;color:#111;letter-spacing:0">-- do not assign --</div>
<svg class="abs" style="left:402.5px;top:365px" width="10" height="6"><path d="M1 0.8 L5 4.8 L9 0.8" fill="none" stroke="#111" stroke-width="1.8"/></svg>
<div class="abs td" style="left:424px;top:361px;width:40px;color:#a0a0a0;letter-spacing:0">-- All --</div>
<svg class="abs" style="left:470.5px;top:365px" width="10" height="6"><path d="M1 0.8 L5 4.8 L9 0.8" fill="none" stroke="#a0a0a0" stroke-width="1.8"/></svg>
<div class="abs td" style="left:493px;top:361px;width:82px;color:#111;letter-spacing:0">-- Uncategorized --</div>
<svg class="abs" style="left:582.5px;top:365px" width="10" height="6"><path d="M1 0.8 L5 4.8 L9 0.8" fill="none" stroke="#111" stroke-width="1.8"/></svg>
<svg class="abs" style="left:601.5px;top:360.3px" width="14" height="14" viewBox="0 0 14 14"><rect width="13.5" height="13.6" rx="2.6" fill="#337ab7"/><g transform="rotate(-45 7 7)" fill="#fff"><path d="M1.2 7 L3.2 5.4 L3.2 8.6Z"/><rect x="3.6" y="5.4" width="6.2" height="3.2"/><rect x="10.4" y="5.4" width="2.6" height="3.2" rx="0.6"/></g></svg>
<div class="abs td" style="left:630px;top:361px;width:22px;color:#111;letter-spacing:0">whole</div>
<svg class="abs" style="left:658.5px;top:365px" width="10" height="6"><path d="M1 0.8 L5 4.8 L9 0.8" fill="none" stroke="#111" stroke-width="1.8"/></svg>
<div class="abs td" style="left:682px;top:361px;width:25.5px;color:#111;letter-spacing:0">Grade</div>
<svg class="abs" style="left:714.5px;top:365px" width="10" height="6"><path d="M1 0.8 L5 4.8 L9 0.8" fill="none" stroke="#111" stroke-width="1.8"/></svg>
<div class="abs td" style="left:737px;top:361px;width:53.5px;color:#111;letter-spacing:0">Standard weight</div>
<svg class="abs" style="left:797.5px;top:365px" width="10" height="6"><path d="M1 0.8 L5 4.8 L9 0.8" fill="none" stroke="#111" stroke-width="1.8"/></svg>
<div class="abs td" style="left:811px;top:361px;width:56px;text-align:center">-</div>
<div class="abs td" style="left:867px;top:361px;width:92px;text-align:center">-</div>
<svg class="abs" style="left:961.5px;top:359.5px" width="17" height="15" viewBox="0 0 17 15"><path d="M2 1 L2 14.5" stroke="#ff5a1f" stroke-width="1.3"/><circle cx="2" cy="1.2" r="0.9" fill="#ff5a1f"/><path d="M4.00 2.40 L4.97 2.48 L5.95 2.70 L6.92 3.00 L7.90 3.30 L8.88 3.52 L9.85 3.60 L10.82 3.52 L11.80 3.30 L12.78 3.00 L13.75 2.70 L14.72 2.48 L15.70 2.40 L15.70 10.00 L14.72 10.08 L13.75 10.30 L12.78 10.60 L11.80 10.90 L10.82 11.12 L9.85 11.20 L8.88 11.12 L7.90 10.90 L6.92 10.60 L5.95 10.30 L4.97 10.08 L4.00 10.00Z" fill="#fff" stroke="#ff5a1f" stroke-width="1.2"/><path d="M7.90 3.30 L9.85 3.60 L11.80 3.30 L11.80 5.83 L9.85 6.13 L7.90 5.83Z M4.00 4.93 L5.95 5.23 L7.90 5.83 L7.90 8.37 L5.95 7.77 L4.00 7.47Z M11.80 5.83 L13.75 5.23 L15.70 4.93 L15.70 7.47 L13.75 7.77 L11.80 8.37Z M7.90 8.37 L9.85 8.67 L11.80 8.37 L11.80 10.90 L9.85 11.20 L7.90 10.90Z" fill="#ff5a1f"/></svg>
<svg class="abs" style="left:999px;top:360.3px" width="14" height="14" viewBox="0 0 14 14"><rect width="13.5" height="13.6" rx="2.6" fill="#337ab7"/><g transform="rotate(-45 7 7)" fill="#fff"><path d="M1.2 7 L3.2 5.4 L3.2 8.6Z"/><rect x="3.6" y="5.4" width="6.2" height="3.2"/><rect x="10.4" y="5.4" width="2.6" height="3.2" rx="0.6"/></g></svg>
<svg class="abs" style="left:1023.5px;top:362.5px" width="11" height="10.5" viewBox="0 0 11 10.5"><path d="M1.6 1.5 L9.4 9 M9.4 1.5 L1.6 9" stroke="#337ab7" stroke-width="2.8" stroke-linecap="round"/></svg>
<svg class="abs" style="left:2px;top:383px" width="8" height="18" viewBox="0 0 8 18"><path d="M1.2 6.6 L4 3.8 L6.8 6.6 M1.2 13.2 L4 16 L6.8 13.2" fill="none" stroke="#7a7a7a" stroke-width="1.2"/></svg>
<div class="abs cb" style="left:18px;top:386px"></div>
<div class="abs" style="left:39px;top:386px;width:14px;height:14px;border-radius:2px;background:#ffc107"></div>
<div class="abs td" style="left:63px;top:386px;width:61px">Performanc</div>
<div class="abs td" style="left:134px;top:386px;width:74px">Perf_ENG</div>
<div class="abs td" style="left:222px;top:386px;width:28px;color:#111;letter-spacing:0">-- all --</div>
<svg class="abs" style="left:257px;top:390px" width="10" height="6"><path d="M1 0.8 L5 4.8 L9 0.8" fill="none" stroke="#111" stroke-width="1.8"/></svg>
<div class="abs td" style="left:280px;top:386px;width:37px;color:#111;letter-spacing:0">Anglický jazyk</div>
<svg class="abs" style="left:325px;top:390px" width="10" height="6"><path d="M1 0.8 L5 4.8 L9 0.8" fill="none" stroke="#111" stroke-width="1.8"/></svg>
<div class="abs td" style="left:346px;top:386px;width:49px;color:#111;letter-spacing:0">-- do not assign --</div>
<svg class="abs" style="left:402.5px;top:390px" width="10" height="6"><path d="M1 0.8 L5 4.8 L9 0.8" fill="none" stroke="#111" stroke-width="1.8"/></svg>
<div class="abs td" style="left:424px;top:386px;width:40px;color:#a0a0a0;letter-spacing:0">-- All --</div>
<svg class="abs" style="left:470.5px;top:390px" width="10" height="6"><path d="M1 0.8 L5 4.8 L9 0.8" fill="none" stroke="#a0a0a0" stroke-width="1.8"/></svg>
<div class="abs td" style="left:493px;top:386px;width:82px;color:#111;letter-spacing:0">-- Uncategorized --</div>
<svg class="abs" style="left:582.5px;top:390px" width="10" height="6"><path d="M1 0.8 L5 4.8 L9 0.8" fill="none" stroke="#111" stroke-width="1.8"/></svg>
<svg class="abs" style="left:601.5px;top:385.3px" width="14" height="14" viewBox="0 0 14 14"><rect width="13.5" height="13.6" rx="2.6" fill="#337ab7"/><g transform="rotate(-45 7 7)" fill="#fff"><path d="M1.2 7 L3.2 5.4 L3.2 8.6Z"/><rect x="3.6" y="5.4" width="6.2" height="3.2"/><rect x="10.4" y="5.4" width="2.6" height="3.2" rx="0.6"/></g></svg>
<div class="abs td" style="left:630px;top:386px;width:22px;color:#111;letter-spacing:0">whole</div>
<svg class="abs" style="left:658.5px;top:390px" width="10" height="6"><path d="M1 0.8 L5 4.8 L9 0.8" fill="none" stroke="#111" stroke-width="1.8"/></svg>
<div class="abs td" style="left:682px;top:386px;width:25.5px;color:#111;letter-spacing:0">Grade</div>
<svg class="abs" style="left:714.5px;top:390px" width="10" height="6"><path d="M1 0.8 L5 4.8 L9 0.8" fill="none" stroke="#111" stroke-width="1.8"/></svg>
<div class="abs td" style="left:737px;top:386px;width:53.5px;color:#111;letter-spacing:0">Standard weight</div>
<svg class="abs" style="left:797.5px;top:390px" width="10" height="6"><path d="M1 0.8 L5 4.8 L9 0.8" fill="none" stroke="#111" stroke-width="1.8"/></svg>
<div class="abs td" style="left:811px;top:386px;width:56px;text-align:center">-</div>
<div class="abs td" style="left:867px;top:386px;width:92px;text-align:center">-</div>
<svg class="abs" style="left:961.5px;top:384.5px" width="17" height="15" viewBox="0 0 17 15"><path d="M2 1 L2 14.5" stroke="#ff5a1f" stroke-width="1.3"/><circle cx="2" cy="1.2" r="0.9" fill="#ff5a1f"/><path d="M4.00 2.40 L4.97 2.48 L5.95 2.70 L6.92 3.00 L7.90 3.30 L8.88 3.52 L9.85 3.60 L10.82 3.52 L11.80 3.30 L12.78 3.00 L13.75 2.70 L14.72 2.48 L15.70 2.40 L15.70 10.00 L14.72 10.08 L13.75 10.30 L12.78 10.60 L11.80 10.90 L10.82 11.12 L9.85 11.20 L8.88 11.12 L7.90 10.90 L6.92 10.60 L5.95 10.30 L4.97 10.08 L4.00 10.00Z" fill="#fff" stroke="#ff5a1f" stroke-width="1.2"/><path d="M7.90 3.30 L9.85 3.60 L11.80 3.30 L11.80 5.83 L9.85 6.13 L7.90 5.83Z M4.00 4.93 L5.95 5.23 L7.90 5.83 L7.90 8.37 L5.95 7.77 L4.00 7.47Z M11.80 5.83 L13.75 5.23 L15.70 4.93 L15.70 7.47 L13.75 7.77 L11.80 8.37Z M7.90 8.37 L9.85 8.67 L11.80 8.37 L11.80 10.90 L9.85 11.20 L7.90 10.90Z" fill="#ff5a1f"/></svg>
<svg class="abs" style="left:999px;top:385.3px" width="14" height="14" viewBox="0 0 14 14"><rect width="13.5" height="13.6" rx="2.6" fill="#337ab7"/><g transform="rotate(-45 7 7)" fill="#fff"><path d="M1.2 7 L3.2 5.4 L3.2 8.6Z"/><rect x="3.6" y="5.4" width="6.2" height="3.2"/><rect x="10.4" y="5.4" width="2.6" height="3.2" rx="0.6"/></g></svg>
<svg class="abs" style="left:1023.5px;top:387.5px" width="11" height="10.5" viewBox="0 0 11 10.5"><path d="M1.6 1.5 L9.4 9 M9.4 1.5 L1.6 9" stroke="#337ab7" stroke-width="2.8" stroke-linecap="round"/></svg>
<svg class="abs" style="left:2px;top:408px" width="8" height="18" viewBox="0 0 8 18"><path d="M1.2 6.6 L4 3.8 L6.8 6.6 M1.2 13.2 L4 16 L6.8 13.2" fill="none" stroke="#7a7a7a" stroke-width="1.2"/></svg>
<div class="abs cb" style="left:18px;top:411px"></div>
<div class="abs" style="left:39px;top:411px;width:14px;height:14px;border-radius:2px;background:#ffeb3b"></div>
<div class="abs td" style="left:63px;top:411px;width:61px">Comprehen</div>
<div class="abs td" style="left:134px;top:411px;width:74px">Com&amp;Wri_EN</div>
<div class="abs td" style="left:222px;top:411px;width:28px;color:#111;letter-spacing:0">-- all --</div>
<svg class="abs" style="left:257px;top:415px" width="10" height="6"><path d="M1 0.8 L5 4.8 L9 0.8" fill="none" stroke="#111" stroke-width="1.8"/></svg>
<div class="abs td" style="left:280px;top:411px;width:37px;color:#111;letter-spacing:0">Anglický jazyk</div>
<svg class="abs" style="left:325px;top:415px" width="10" height="6"><path d="M1 0.8 L5 4.8 L9 0.8" fill="none" stroke="#111" stroke-width="1.8"/></svg>
<div class="abs td" style="left:346px;top:411px;width:49px;color:#111;letter-spacing:0">-- do not assign --</div>
<svg class="abs" style="left:402.5px;top:415px" width="10" height="6"><path d="M1 0.8 L5 4.8 L9 0.8" fill="none" stroke="#111" stroke-width="1.8"/></svg>
<div class="abs td" style="left:424px;top:411px;width:40px;color:#a0a0a0;letter-spacing:0">-- All --</div>
<svg class="abs" style="left:470.5px;top:415px" width="10" height="6"><path d="M1 0.8 L5 4.8 L9 0.8" fill="none" stroke="#a0a0a0" stroke-width="1.8"/></svg>
<div class="abs td" style="left:493px;top:411px;width:82px;color:#111;letter-spacing:0">-- Uncategorized --</div>
<svg class="abs" style="left:582.5px;top:415px" width="10" height="6"><path d="M1 0.8 L5 4.8 L9 0.8" fill="none" stroke="#111" stroke-width="1.8"/></svg>
<svg class="abs" style="left:601.5px;top:410.3px" width="14" height="14" viewBox="0 0 14 14"><rect width="13.5" height="13.6" rx="2.6" fill="#337ab7"/><g transform="rotate(-45 7 7)" fill="#fff"><path d="M1.2 7 L3.2 5.4 L3.2 8.6Z"/><rect x="3.6" y="5.4" width="6.2" height="3.2"/><rect x="10.4" y="5.4" width="2.6" height="3.2" rx="0.6"/></g></svg>
<div class="abs td" style="left:630px;top:411px;width:22px;color:#111;letter-spacing:0">whole</div>
<svg class="abs" style="left:658.5px;top:415px" width="10" height="6"><path d="M1 0.8 L5 4.8 L9 0.8" fill="none" stroke="#111" stroke-width="1.8"/></svg>
<div class="abs td" style="left:682px;top:411px;width:25.5px;color:#111;letter-spacing:0">Grade</div>
<svg class="abs" style="left:714.5px;top:415px" width="10" height="6"><path d="M1 0.8 L5 4.8 L9 0.8" fill="none" stroke="#111" stroke-width="1.8"/></svg>
<div class="abs td" style="left:737px;top:411px;width:53.5px;color:#111;letter-spacing:0">Standard weight</div>
<svg class="abs" style="left:797.5px;top:415px" width="10" height="6"><path d="M1 0.8 L5 4.8 L9 0.8" fill="none" stroke="#111" stroke-width="1.8"/></svg>
<div class="abs td" style="left:811px;top:411px;width:56px;text-align:center">-</div>
<div class="abs td" style="left:867px;top:411px;width:92px;text-align:center">-</div>
<svg class="abs" style="left:961.5px;top:409.5px" width="17" height="15" viewBox="0 0 17 15"><path d="M2 1 L2 14.5" stroke="#ff5a1f" stroke-width="1.3"/><circle cx="2" cy="1.2" r="0.9" fill="#ff5a1f"/><path d="M4.00 2.40 L4.97 2.48 L5.95 2.70 L6.92 3.00 L7.90 3.30 L8.88 3.52 L9.85 3.60 L10.82 3.52 L11.80 3.30 L12.78 3.00 L13.75 2.70 L14.72 2.48 L15.70 2.40 L15.70 10.00 L14.72 10.08 L13.75 10.30 L12.78 10.60 L11.80 10.90 L10.82 11.12 L9.85 11.20 L8.88 11.12 L7.90 10.90 L6.92 10.60 L5.95 10.30 L4.97 10.08 L4.00 10.00Z" fill="#fff" stroke="#ff5a1f" stroke-width="1.2"/><path d="M7.90 3.30 L9.85 3.60 L11.80 3.30 L11.80 5.83 L9.85 6.13 L7.90 5.83Z M4.00 4.93 L5.95 5.23 L7.90 5.83 L7.90 8.37 L5.95 7.77 L4.00 7.47Z M11.80 5.83 L13.75 5.23 L15.70 4.93 L15.70 7.47 L13.75 7.77 L11.80 8.37Z M7.90 8.37 L9.85 8.67 L11.80 8.37 L11.80 10.90 L9.85 11.20 L7.90 10.90Z" fill="#ff5a1f"/></svg>
<svg class="abs" style="left:999px;top:410.3px" width="14" height="14" viewBox="0 0 14 14"><rect width="13.5" height="13.6" rx="2.6" fill="#337ab7"/><g transform="rotate(-45 7 7)" fill="#fff"><path d="M1.2 7 L3.2 5.4 L3.2 8.6Z"/><rect x="3.6" y="5.4" width="6.2" height="3.2"/><rect x="10.4" y="5.4" width="2.6" height="3.2" rx="0.6"/></g></svg>
<svg class="abs" style="left:1023.5px;top:412.5px" width="11" height="10.5" viewBox="0 0 11 10.5"><path d="M1.6 1.5 L9.4 9 M9.4 1.5 L1.6 9" stroke="#337ab7" stroke-width="2.8" stroke-linecap="round"/></svg>
<svg class="abs" style="left:2px;top:433px" width="8" height="18" viewBox="0 0 8 18"><path d="M1.2 6.6 L4 3.8 L6.8 6.6 M1.2 13.2 L4 16 L6.8 13.2" fill="none" stroke="#7a7a7a" stroke-width="1.2"/></svg>
<div class="abs cb" style="left:18px;top:436px"></div>
<div class="abs" style="left:39px;top:436px;width:14px;height:14px;border-radius:2px;background:#cddc39"></div>
<div class="abs td" style="left:63px;top:436px;width:61px">Grammar &amp;</div>
<div class="abs td" style="left:134px;top:436px;width:74px">Gra&amp;Vo_ENG</div>
<div class="abs td" style="left:222px;top:436px;width:28px;color:#111;letter-spacing:0">-- all --</div>
<svg class="abs" style="left:257px;top:440px" width="10" height="6"><path d="M1 0.8 L5 4.8 L9 0.8" fill="none" stroke="#111" stroke-width="1.8"/></svg>
<div class="abs td" style="left:280px;top:436px;width:37px;color:#111;letter-spacing:0">Anglický jazyk</div>
<svg class="abs" style="left:325px;top:440px" width="10" height="6"><path d="M1 0.8 L5 4.8 L9 0.8" fill="none" stroke="#111" stroke-width="1.8"/></svg>
<div class="abs td" style="left:346px;top:436px;width:49px;color:#111;letter-spacing:0">-- do not assign --</div>
<svg class="abs" style="left:402.5px;top:440px" width="10" height="6"><path d="M1 0.8 L5 4.8 L9 0.8" fill="none" stroke="#111" stroke-width="1.8"/></svg>
<div class="abs td" style="left:424px;top:436px;width:40px;color:#a0a0a0;letter-spacing:0">-- All --</div>
<svg class="abs" style="left:470.5px;top:440px" width="10" height="6"><path d="M1 0.8 L5 4.8 L9 0.8" fill="none" stroke="#a0a0a0" stroke-width="1.8"/></svg>
<div class="abs td" style="left:493px;top:436px;width:82px;color:#111;letter-spacing:0">-- Uncategorized --</div>
<svg class="abs" style="left:582.5px;top:440px" width="10" height="6"><path d="M1 0.8 L5 4.8 L9 0.8" fill="none" stroke="#111" stroke-width="1.8"/></svg>
<svg class="abs" style="left:601.5px;top:435.3px" width="14" height="14" viewBox="0 0 14 14"><rect width="13.5" height="13.6" rx="2.6" fill="#337ab7"/><g transform="rotate(-45 7 7)" fill="#fff"><path d="M1.2 7 L3.2 5.4 L3.2 8.6Z"/><rect x="3.6" y="5.4" width="6.2" height="3.2"/><rect x="10.4" y="5.4" width="2.6" height="3.2" rx="0.6"/></g></svg>
<div class="abs td" style="left:630px;top:436px;width:22px;color:#111;letter-spacing:0">whole</div>
<svg class="abs" style="left:658.5px;top:440px" width="10" height="6"><path d="M1 0.8 L5 4.8 L9 0.8" fill="none" stroke="#111" stroke-width="1.8"/></svg>
<div class="abs td" style="left:682px;top:436px;width:25.5px;color:#111;letter-spacing:0">Grade</div>
<svg class="abs" style="left:714.5px;top:440px" width="10" height="6"><path d="M1 0.8 L5 4.8 L9 0.8" fill="none" stroke="#111" stroke-width="1.8"/></svg>
<div class="abs td" style="left:737px;top:436px;width:53.5px;color:#111;letter-spacing:0">Standard weight</div>
<svg class="abs" style="left:797.5px;top:440px" width="10" height="6"><path d="M1 0.8 L5 4.8 L9 0.8" fill="none" stroke="#111" stroke-width="1.8"/></svg>
<div class="abs td" style="left:811px;top:436px;width:56px;text-align:center">-</div>
<div class="abs td" style="left:867px;top:436px;width:92px;text-align:center">-</div>
<svg class="abs" style="left:961.5px;top:434.5px" width="17" height="15" viewBox="0 0 17 15"><path d="M2 1 L2 14.5" stroke="#ff5a1f" stroke-width="1.3"/><circle cx="2" cy="1.2" r="0.9" fill="#ff5a1f"/><path d="M4.00 2.40 L4.97 2.48 L5.95 2.70 L6.92 3.00 L7.90 3.30 L8.88 3.52 L9.85 3.60 L10.82 3.52 L11.80 3.30 L12.78 3.00 L13.75 2.70 L14.72 2.48 L15.70 2.40 L15.70 10.00 L14.72 10.08 L13.75 10.30 L12.78 10.60 L11.80 10.90 L10.82 11.12 L9.85 11.20 L8.88 11.12 L7.90 10.90 L6.92 10.60 L5.95 10.30 L4.97 10.08 L4.00 10.00Z" fill="#fff" stroke="#ff5a1f" stroke-width="1.2"/><path d="M7.90 3.30 L9.85 3.60 L11.80 3.30 L11.80 5.83 L9.85 6.13 L7.90 5.83Z M4.00 4.93 L5.95 5.23 L7.90 5.83 L7.90 8.37 L5.95 7.77 L4.00 7.47Z M11.80 5.83 L13.75 5.23 L15.70 4.93 L15.70 7.47 L13.75 7.77 L11.80 8.37Z M7.90 8.37 L9.85 8.67 L11.80 8.37 L11.80 10.90 L9.85 11.20 L7.90 10.90Z" fill="#ff5a1f"/></svg>
<svg class="abs" style="left:999px;top:435.3px" width="14" height="14" viewBox="0 0 14 14"><rect width="13.5" height="13.6" rx="2.6" fill="#337ab7"/><g transform="rotate(-45 7 7)" fill="#fff"><path d="M1.2 7 L3.2 5.4 L3.2 8.6Z"/><rect x="3.6" y="5.4" width="6.2" height="3.2"/><rect x="10.4" y="5.4" width="2.6" height="3.2" rx="0.6"/></g></svg>
<svg class="abs" style="left:1023.5px;top:437.5px" width="11" height="10.5" viewBox="0 0 11 10.5"><path d="M1.6 1.5 L9.4 9 M9.4 1.5 L1.6 9" stroke="#337ab7" stroke-width="2.8" stroke-linecap="round"/></svg>
<svg class="abs" style="left:43px;top:462px" width="10" height="10"><path d="M5 0 L5 10 M0 5 L10 5" stroke="#3a80c3" stroke-width="2.8"/></svg>
<div class="abs" style="left:59px;top:461px;color:#3a80c3;font-size:12px">Add row</div>
<div class="abs" style="left:0;top:480px;width:1040px;height:49px;background:#eee;border-bottom:1px solid #ddd"></div>
<div class="abs" style="left:29px;top:490px;width:71px;height:28px;background:#3498db;border-radius:2px"></div>
<div class="abs" style="left:113px;top:490px;width:78px;height:28px;background:#e74c3c;border-radius:2px"></div>
<div class="abs" style="left:204px;top:490px;width:77px;height:28px;background:#2ecc71;border-radius:2px"></div>
<div class="abs" style="left:284px;top:490px;width:77px;height:28px;background:#2ecc71;border-radius:2px"></div>
<div class="abs" style="left:60.30000000000001px;top:497.20000000000005px;color:#fff;font-size:12px;-webkit-text-stroke:0.25px #fff">Copy</div>
<div class="abs" style="left:144.7px;top:497.20000000000005px;color:#fff;font-size:12px;-webkit-text-stroke:0.25px #fff">Delete</div>
<div class="abs" style="left:235px;top:497.20000000000005px;color:#fff;font-size:12px;-webkit-text-stroke:0.25px #fff">Import</div>
<div class="abs" style="left:315.5px;top:497.20000000000005px;color:#fff;font-size:12px;-webkit-text-stroke:0.25px #fff">Export</div>
<svg class="abs" style="left:42.80000000000001px;top:497.5px" width="13" height="12.5" viewBox="0 0 13 12.5"><path d="M5 8.6 L0.6 8.6 L0.6 3.2 L3.2 0.6 L7.6 0.6 L7.6 3.6" fill="none" stroke="#fff" stroke-width="1.1"/><path d="M3.2 0.6 L3.2 3.2 L0.6 3.2" fill="none" stroke="#fff" stroke-width="0.9"/><path d="M5 6.2 L7.6 3.6 L12.4 3.6 L12.4 11.9 L5 11.9Z" fill="#3498db" stroke="#fff" stroke-width="1.1"/><path d="M7.6 3.6 L7.6 6.2 L5 6.2" fill="none" stroke="#fff" stroke-width="0.9"/></svg>
<svg class="abs" style="left:128px;top:500.20000000000005px" width="9" height="8.2" viewBox="0 0 9 8.2"><path d="M1.2 1 L7.8 7.2 M7.8 1 L1.2 7.2" stroke="#fff" stroke-width="2.6"/></svg>
<svg class="abs" style="left:218.2px;top:499px" width="11.5" height="9.5" viewBox="0 0 11.5 9.5"><path d="M0 3.3 L3.6 3.3 L3.6 0.6 L7.6 4.75 L3.6 8.9 L3.6 6.2 L0 6.2Z" fill="#fff"/><path d="M6.5 0.6 L9.6 0.6 C10.5 0.6 11 1.1 11 2 L11 7.5 C11 8.4 10.5 8.9 9.6 8.9 L6.5 8.9" fill="none" stroke="#fff" stroke-width="1.1"/></svg>
<svg class="abs" style="left:298px;top:499px" width="11.5" height="9.5" viewBox="0 0 11.5 9.5"><path d="M4.5 0.6 L1.9 0.6 C1 0.6 0.5 1.1 0.5 2 L0.5 7.5 C0.5 8.4 1 8.9 1.9 8.9 L4.5 8.9" fill="none" stroke="#fff" stroke-width="1.1"/><path d="M3.4 3.3 L7 3.3 L7 0.6 L11.2 4.75 L7 8.9 L7 6.2 L3.4 6.2Z" fill="#fff"/></svg>
<div class="abs" style="left:20px;top:549px;width:69px;height:36px;background:#4aa553;border-radius:2px;color:#fff;text-align:center;line-height:36px;-webkit-text-stroke:0.25px #fff">Save</div>
<!--/MAIN-->
  </div>
</div>
<div id="rstrip"></div>
<div id="bstrip">
  <div class="abs" style="left:0;top:0;width:53px;height:17px;background:#141414"></div>
  <div class="abs" style="left:760px;top:0;width:302px;height:17px;background:#181818"></div>
  <div class="abs" style="left:783px;top:6px;color:#8a8a8a;font-size:12px">Datum úpravy</div>
  <div class="abs" style="left:953px;top:6px;color:#8a8a8a;font-size:12px;letter-spacing:-0.3px">10. 2. 2026 12:23</div>
</div>
</body></html>
